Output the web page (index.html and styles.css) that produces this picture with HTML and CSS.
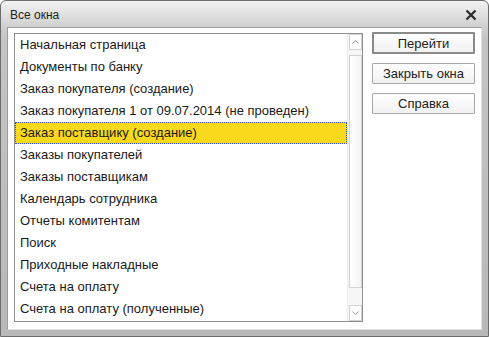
FILE: index.html
```html
<!DOCTYPE html>
<html lang="ru">
<head>
    <meta charset="UTF-8">
    <title>Все окна</title>
    <link rel="stylesheet" href="styles.css">
</head>
<body>
    <div class="window">
        <div class="titlebar">
            <span class="title">Все окна</span>
            <svg class="close" width="12" height="12" viewBox="0 0 12 12">
                <path d="M1.5 1.5 L10.5 10.5 M10.5 1.5 L1.5 10.5" stroke="#2a2a2a" stroke-width="2.2" fill="none"/>
            </svg>
        </div>
        <div class="client">
            <div class="listbox">
                <ul class="items">
                    <li>Начальная страница</li>
                    <li>Документы по банку</li>
                    <li>Заказ покупателя (создание)</li>
                    <li>Заказ покупателя 1 от 09.07.2014 (не проведен)</li>
                    <li class="selected">Заказ поставщику (создание)</li>
                    <li>Заказы покупателей</li>
                    <li>Заказы поставщикам</li>
                    <li>Календарь сотрудника</li>
                    <li>Отчеты комитентам</li>
                    <li>Поиск</li>
                    <li>Приходные накладные</li>
                    <li>Счета на оплату</li>
                    <li>Счета на оплату (полученные)</li>
                </ul>
                <div class="scrollbar">
                    <div class="sb-btn">
                        <svg width="7" height="4" viewBox="0 0 7 4"><path d="M0.5 3.5 L3.5 0.5 L6.5 3.5" stroke="#9a9a9a" fill="none"/></svg>
                    </div>
                    <div class="sb-thumb"></div>
                    <div class="sb-btn">
                        <svg width="7" height="4" viewBox="0 0 7 4"><path d="M0.5 0.5 L3.5 3.5 L6.5 0.5" stroke="#9a9a9a" fill="none"/></svg>
                    </div>
                </div>
            </div>
            <div class="buttons">
                <button class="btn default">Перейти</button>
                <button class="btn">Закрыть окна</button>
                <button class="btn">Справка</button>
            </div>
        </div>
    </div>
</body>
</html>
```

FILE: styles.css
```css
body {
    margin: 0;
    font-family: "Liberation Sans", Arial, sans-serif;
    background: #ffffff;
}
.window {
    width: 489px;
    height: 337px;
    box-sizing: border-box;
    border: 1px solid #6c6c6c;
    border-radius: 6px 6px 0 0;
    background: linear-gradient(#f2f2f2, #cdcdcd 28px, #c4c4c4 40px, #b8b8b8);
    display: flex;
    flex-direction: column;
    padding: 0 6px 6px 6px;
}
.titlebar {
    height: 28px;
    display: flex;
    align-items: center;
    justify-content: space-between;
    padding: 0 5px 0 3px;
}
.title {
    font-size: 12px;
    color: #1e1e1e;
    margin-top: 2px;
}
.close {
    margin-top: 1px;
}
.client {
    flex: 1;
    background: #ffffff;
    border: 1px solid #9c9c9c;
    border-right-color: #e0e0e0;
    border-bottom-color: #e0e0e0;
    display: flex;
    padding: 4px 6px 7px 6px;
    gap: 9px;
}
.listbox {
    width: 349px;
    height: 289px;
    margin-top: 1px;
    box-sizing: border-box;
    border: 1px solid #8f8f8f;
    display: flex;
}
.items {
    list-style: none;
    margin: 0;
    padding: 0;
    flex: 1;
}
.items li {
    height: 22px;
    line-height: 22px;
    box-sizing: border-box;
    padding-left: 5px;
    font-size: 13px;
    color: #1a1a1a;
    white-space: nowrap;
}
.items li.selected {
    background: #fad81c;
    border: 1px dotted #3a52c4;
    line-height: 20px;
    padding-left: 4px;
}
.scrollbar {
    width: 15px;
    box-sizing: border-box;
    background: #f6f6f6;
    border-left: 1px solid #ececec;
    display: flex;
    flex-direction: column;
    padding: 0 0 0 1px;
    gap: 5px;
}
.sb-btn {
    height: 16px;
    box-sizing: border-box;
    border: 1px solid #d2d2d2;
    background: #fdfdfd;
    display: flex;
    align-items: center;
    justify-content: center;
}
.sb-thumb {
    flex: 1;
    border: 1px solid #d2d2d2;
    background: linear-gradient(90deg, #ffffff, #f3f3f3);
    margin-bottom: 12px;
}
.buttons {
    display: flex;
    flex-direction: column;
    gap: 9px;
}
.btn {
    width: 103px;
    height: 21px;
    font-family: "Liberation Sans", Arial, sans-serif;
    font-size: 13px;
    color: #222222;
    background: linear-gradient(#ffffff, #f1f1f1);
    border: 1px solid #a8a8a8;
    border-radius: 1px;
    padding: 0;
    margin: 0;
}
.btn.default {
    height: 22px;
    border: 2px solid #8a8a8a;
}
```
